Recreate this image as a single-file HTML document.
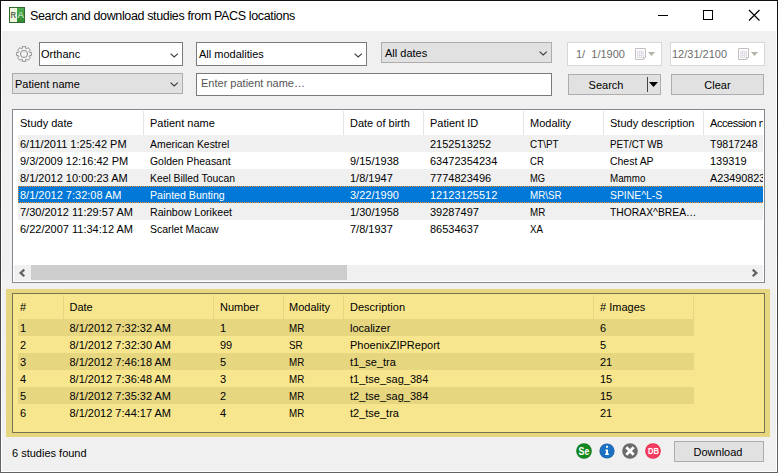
<!DOCTYPE html>
<html><head><meta charset="utf-8">
<style>
*{box-sizing:border-box;margin:0;padding:0}
html,body{width:778px;height:473px;overflow:hidden;background:#f0f0f0}
body{position:relative;font-family:"Liberation Sans",sans-serif;font-size:11px;color:#000}
.a{position:absolute}
.t{position:absolute;white-space:pre;line-height:13px;font-size:11px}
.cb{background:#fff;border:1px solid #7a7a7a}
.cbg{background:#e1e1e1;border:1px solid #adadad}
</style></head><body>
<div class="a" style="left:0;top:0;width:778px;height:473px;background:linear-gradient(#111,#636363)"></div>
<div class="a" style="left:1px;top:1px;width:776px;height:471px;background:#fff"></div>
<div class="a" style="left:2px;top:31px;width:774px;height:440px;background:#f0f0f0"></div>
<!-- app icon -->
<svg class="a" style="left:9px;top:7px" width="16" height="16" viewBox="0 0 16 16">
<defs><linearGradient id="g1" x1="0" y1="0" x2="0" y2="1"><stop offset="0" stop-color="#52ad4f"/><stop offset="1" stop-color="#2f8a30"/></linearGradient></defs>
<rect x="0.5" y="0.5" width="15" height="15" fill="url(#g1)" stroke="#2d6b2d"/>
<rect x="1" y="1" width="7" height="14" fill="#eff4de"/>
<text x="1.6" y="11.3" font-family="Liberation Sans" font-weight="bold" font-size="9.5" fill="#5c705c" textLength="5.6" lengthAdjust="spacingAndGlyphs">R</text>
<text x="8.4" y="11.3" font-family="Liberation Sans" font-size="9.5" fill="#e4f2e2" textLength="6.4" lengthAdjust="spacingAndGlyphs">A</text>
</svg>
<div class="t" style="left:30px;top:10px;font-size:12.5px;letter-spacing:-0.36px">Search and download studies from PACS locations</div>
<!-- caption buttons -->
<div class="a" style="left:658px;top:15px;width:10px;height:1px;background:#000"></div>
<div class="a" style="left:703px;top:10px;width:10px;height:10px;border:1px solid #000"></div>
<svg class="a" style="left:748px;top:9px" width="13" height="13" viewBox="0 0 13 13"><path d="M1 1L11.5 11.5M11.5 1L1 11.5" stroke="#000" stroke-width="1.15"/></svg>

<!-- row 1 controls -->
<svg class="a" style="left:16px;top:46px" width="16" height="16" viewBox="0 0 16 16"><g fill="#f8f8f8" stroke="#8c8c8c" stroke-width="1"><path d="M6.30 2.66 L6.30 0.70 L9.70 0.70 L9.70 2.66 L10.57 3.02 L11.96 1.63 L14.37 4.04 L12.98 5.43 L13.34 6.30 L15.30 6.30 L15.30 9.70 L13.34 9.70 L12.98 10.57 L14.37 11.96 L11.96 14.37 L10.57 12.98 L9.70 13.34 L9.70 15.30 L6.30 15.30 L6.30 13.34 L5.43 12.98 L4.04 14.37 L1.63 11.96 L3.02 10.57 L2.66 9.70 L0.70 9.70 L0.70 6.30 L2.66 6.30 L3.02 5.43 L1.63 4.04 L4.04 1.63 L5.43 3.02Z"/><circle cx="8" cy="8" r="3.6" fill="#f0f0f0"/></g></svg>
<div class="a cb" style="left:39px;top:42px;width:144px;height:24px"></div>
<div class="t" style="left:41px;top:48px">Orthanc</div>
<svg class="a" style="left:170px;top:53px" width="9" height="5" viewBox="0 0 9 5"><path d="M0.6 0.6L4.2 4L7.8 0.6" fill="none" stroke="#3a3a3a" stroke-width="1.1"/></svg>
<div class="a cb" style="left:196px;top:42px;width:171px;height:24px"></div>
<div class="t" style="left:199px;top:48px">All modalities</div>
<svg class="a" style="left:354px;top:53px" width="9" height="5" viewBox="0 0 9 5"><path d="M0.6 0.6L4.2 4L7.8 0.6" fill="none" stroke="#3a3a3a" stroke-width="1.1"/></svg>
<div class="a cbg" style="left:381px;top:42px;width:171px;height:21px"></div>
<div class="t" style="left:385px;top:47px">All dates</div>
<svg class="a" style="left:539px;top:51px" width="9" height="5" viewBox="0 0 9 5"><path d="M0.6 0.6L4.2 4L7.8 0.6" fill="none" stroke="#3a3a3a" stroke-width="1.1"/></svg>
<!-- date boxes -->
<div class="a" style="left:567px;top:42px;width:95px;height:24px;background:#fff;border:1px solid #d6d6d6"></div>
<div class="t" style="left:576px;top:48px;color:#6d6d6d">1/  1/1900</div>
<svg class="a" style="left:635px;top:48px" width="12" height="13" viewBox="0 0 12 13"><path d="M0.5 0.5H10.5V9.5L8.5 11.5H0.5Z" fill="#fdfdff" stroke="#c9bebe"/><rect x="2" y="3" width="7" height="7" fill="#e0e0e8"/><g fill="#fff"><rect x="3" y="4" width="1" height="1"/><rect x="5" y="4" width="1" height="1"/><rect x="7" y="4" width="1" height="1"/><rect x="3" y="6" width="1" height="1"/><rect x="5" y="6" width="1" height="1"/><rect x="7" y="6" width="1" height="1"/><rect x="3" y="8" width="1" height="1"/><rect x="5" y="8" width="1" height="1"/><rect x="7" y="8" width="1" height="1"/></g><path d="M8.5 11.5V9.5H10.5" fill="none" stroke="#d6cccc"/></svg>
<svg class="a" style="left:648px;top:52px" width="7" height="4" viewBox="0 0 7 4"><path d="M0 0H7L3.5 4Z" fill="#b4b4a6"/></svg>
<div class="a" style="left:670px;top:42px;width:95px;height:24px;background:#fff;border:1px solid #d6d6d6"></div>
<div class="t" style="left:672px;top:48px;color:#6d6d6d">12/31/2100</div>
<svg class="a" style="left:738px;top:48px" width="12" height="13" viewBox="0 0 12 13"><path d="M0.5 0.5H10.5V9.5L8.5 11.5H0.5Z" fill="#fdfdff" stroke="#c9bebe"/><rect x="2" y="3" width="7" height="7" fill="#e0e0e8"/><g fill="#fff"><rect x="3" y="4" width="1" height="1"/><rect x="5" y="4" width="1" height="1"/><rect x="7" y="4" width="1" height="1"/><rect x="3" y="6" width="1" height="1"/><rect x="5" y="6" width="1" height="1"/><rect x="7" y="6" width="1" height="1"/><rect x="3" y="8" width="1" height="1"/><rect x="5" y="8" width="1" height="1"/><rect x="7" y="8" width="1" height="1"/></g><path d="M8.5 11.5V9.5H10.5" fill="none" stroke="#d6cccc"/></svg>
<svg class="a" style="left:751px;top:52px" width="7" height="4" viewBox="0 0 7 4"><path d="M0 0H7L3.5 4Z" fill="#b4b4a6"/></svg>

<!-- row 2 controls -->
<div class="a cbg" style="left:12px;top:73px;width:171px;height:21px"></div>
<div class="t" style="left:15px;top:78px">Patient name</div>
<svg class="a" style="left:170px;top:82px" width="9" height="5" viewBox="0 0 9 5"><path d="M0.6 0.6L4.2 4L7.8 0.6" fill="none" stroke="#3a3a3a" stroke-width="1.1"/></svg>
<div class="a cb" style="left:196px;top:73px;width:356px;height:23px"></div>
<div class="t" style="left:201px;top:77px;color:#555">Enter patient name…</div>
<div class="a cbg" style="left:568px;top:74px;width:93px;height:21px"></div>
<div class="t" style="left:567px;top:79px;width:78px;text-align:center">Search</div>
<div class="a" style="left:647px;top:77px;width:1px;height:15px;background:#444"></div>
<svg class="a" style="left:649px;top:82px" width="9" height="5" viewBox="0 0 9 5"><path d="M0 0H9L4.5 5Z" fill="#000"/></svg>
<div class="a cbg" style="left:671px;top:74px;width:93px;height:21px"></div>
<div class="t" style="left:671px;top:79px;width:93px;text-align:center">Clear</div>


<div class="a" style="left:12px;top:109px;width:753px;height:174px;background:#fff;border:1px solid #828790"></div>
<div class="a" style="left:143px;top:111px;width:1px;height:24px;background:#e5e5e5"></div>
<div class="a" style="left:343px;top:111px;width:1px;height:24px;background:#e5e5e5"></div>
<div class="a" style="left:423px;top:111px;width:1px;height:24px;background:#e5e5e5"></div>
<div class="a" style="left:523px;top:111px;width:1px;height:24px;background:#e5e5e5"></div>
<div class="a" style="left:603px;top:111px;width:1px;height:24px;background:#e5e5e5"></div>
<div class="a" style="left:703px;top:111px;width:1px;height:24px;background:#e5e5e5"></div>
<div class="a" style="left:13px;top:110px;width:750px;height:155px;overflow:hidden">
<div class="t" style="left:7px;top:7px;">Study date</div>
<div class="t" style="left:137px;top:7px;">Patient name</div>
<div class="t" style="left:337px;top:7px;">Date of birth</div>
<div class="t" style="left:417px;top:7px;">Patient ID</div>
<div class="t" style="left:517px;top:7px;">Modality</div>
<div class="t" style="left:597px;top:7px;">Study description</div>
<div class="t" style="left:697px;top:7px;letter-spacing:-0.45px;">Accession number</div>
<div class="a" style="left:5px;top:25px;width:745px;height:17px;background:#f0f0f0"></div>
<div class="t" style="left:7px;top:28px;">6/11/2011 1:25:42 PM</div>
<div class="t" style="left:137px;top:28px;transform:scaleX(0.947);transform-origin:0 0;">American Kestrel</div>
<div class="t" style="left:417px;top:28px;">2152513252</div>
<div class="t" style="left:517px;top:28px;transform:scaleX(0.9);transform-origin:0 0;">CT\PT</div>
<div class="t" style="left:597px;top:28px;transform:scaleX(0.89);transform-origin:0 0;">PET/CT WB</div>
<div class="t" style="left:697px;top:28px;transform:scaleX(0.96);transform-origin:0 0;">T9817248</div>
<div class="t" style="left:7px;top:45px;">9/3/2009 12:16:42 PM</div>
<div class="t" style="left:137px;top:45px;transform:scaleX(0.948);transform-origin:0 0;">Golden Pheasant</div>
<div class="t" style="left:337px;top:45px;">9/15/1938</div>
<div class="t" style="left:417px;top:45px;">63472354234</div>
<div class="t" style="left:517px;top:45px;transform:scaleX(0.87);transform-origin:0 0;">CR</div>
<div class="t" style="left:597px;top:45px;transform:scaleX(0.95);transform-origin:0 0;">Chest AP</div>
<div class="t" style="left:697px;top:45px;">139319</div>
<div class="a" style="left:5px;top:59px;width:745px;height:17px;background:#f0f0f0"></div>
<div class="t" style="left:7px;top:62px;">8/1/2012 10:00:23 AM</div>
<div class="t" style="left:137px;top:62px;transform:scaleX(0.94);transform-origin:0 0;">Keel Billed Toucan</div>
<div class="t" style="left:337px;top:62px;">1/8/1947</div>
<div class="t" style="left:417px;top:62px;">7774823496</div>
<div class="t" style="left:517px;top:62px;transform:scaleX(0.85);transform-origin:0 0;">MG</div>
<div class="t" style="left:597px;top:62px;transform:scaleX(0.89);transform-origin:0 0;">Mammo</div>
<div class="t" style="left:697px;top:62px;transform:scaleX(0.98);transform-origin:0 0;">A23490823</div>
<div class="a" style="left:5px;top:76px;width:745px;height:17px;background:#0078d7"></div>
<div class="a" style="left:5px;top:76px;width:745px;height:17px;border:1px dotted #ff8a1c;border-right:0"></div>
<div class="t" style="left:7px;top:79px;color:#fff;">8/1/2012 7:32:08 AM</div>
<div class="t" style="left:137px;top:79px;color:#fff;transform:scaleX(0.962);transform-origin:0 0;">Painted Bunting</div>
<div class="t" style="left:337px;top:79px;color:#fff;">3/22/1990</div>
<div class="t" style="left:417px;top:79px;color:#fff;">12123125512</div>
<div class="t" style="left:517px;top:79px;color:#fff;transform:scaleX(0.89);transform-origin:0 0;">MR\SR</div>
<div class="t" style="left:597px;top:79px;color:#fff;transform:scaleX(0.945);transform-origin:0 0;">SPINE^L-S</div>
<div class="a" style="left:5px;top:93px;width:745px;height:17px;background:#f0f0f0"></div>
<div class="t" style="left:7px;top:96px;">7/30/2012 11:29:57 AM</div>
<div class="t" style="left:137px;top:96px;transform:scaleX(0.965);transform-origin:0 0;">Rainbow Lorikeet</div>
<div class="t" style="left:337px;top:96px;">1/30/1958</div>
<div class="t" style="left:417px;top:96px;">39287497</div>
<div class="t" style="left:517px;top:96px;transform:scaleX(0.89);transform-origin:0 0;">MR</div>
<div class="t" style="left:597px;top:96px;transform:scaleX(0.94);transform-origin:0 0;">THORAX^BREA…</div>
<div class="t" style="left:7px;top:113px;">6/22/2007 11:34:12 AM</div>
<div class="t" style="left:137px;top:113px;transform:scaleX(0.952);transform-origin:0 0;">Scarlet Macaw</div>
<div class="t" style="left:337px;top:113px;">7/8/1937</div>
<div class="t" style="left:417px;top:113px;">86534637</div>
<div class="t" style="left:517px;top:113px;transform:scaleX(0.88);transform-origin:0 0;">XA</div>
</div>
<div class="a" style="left:14px;top:265px;width:749px;height:16px;background:#f0f0f0"></div>
<div class="a" style="left:31px;top:265px;width:316px;height:15px;background:#cdcdcd"></div>
<svg class="a" style="left:14px;top:265px" width="17" height="16" viewBox="0 0 17 16"><path d="M10.3 4.6L6.6 7.9L10.3 11.2" fill="none" stroke="#606060" stroke-width="2.2"/></svg>
<svg class="a" style="left:746px;top:265px" width="17" height="16" viewBox="0 0 17 16"><path d="M6.7 4.6L10.4 7.9L6.7 11.2" fill="none" stroke="#606060" stroke-width="2.2"/></svg>
<div class="a" style="left:6px;top:289px;width:764px;height:148px;background:#e6d680"></div>
<div class="a" style="left:12px;top:293px;width:753px;height:140px;background:#f7e68e;border:1px solid #77734f"></div>
<div class="a" style="left:63px;top:295px;width:1px;height:24px;background:#e6d680"></div>
<div class="a" style="left:213px;top:295px;width:1px;height:24px;background:#e6d680"></div>
<div class="a" style="left:283px;top:295px;width:1px;height:24px;background:#e6d680"></div>
<div class="a" style="left:343px;top:295px;width:1px;height:24px;background:#e6d680"></div>
<div class="a" style="left:593px;top:295px;width:1px;height:24px;background:#e6d680"></div>
<div class="a" style="left:693px;top:295px;width:1px;height:24px;background:#e6d680"></div>
<div class="t" style="left:20px;top:301px;">#</div>
<div class="t" style="left:69.5px;top:301px;">Date</div>
<div class="t" style="left:220px;top:301px;">Number</div>
<div class="t" style="left:289px;top:301px;">Modality</div>
<div class="t" style="left:350px;top:301px;">Description</div>
<div class="t" style="left:600px;top:301px;"># Images</div>
<div class="a" style="left:18px;top:319px;width:676px;height:17px;background:#e6d680"></div>
<div class="t" style="left:20px;top:322px;">1</div>
<div class="t" style="left:69.5px;top:322px;">8/1/2012 7:32:32 AM</div>
<div class="t" style="left:220px;top:322px;">1</div>
<div class="t" style="left:289px;top:322px;transform:scaleX(0.89);transform-origin:0 0;">MR</div>
<div class="t" style="left:350px;top:322px;">localizer</div>
<div class="t" style="left:600px;top:322px;">6</div>
<div class="t" style="left:20px;top:339px;">2</div>
<div class="t" style="left:69.5px;top:339px;">8/1/2012 7:32:30 AM</div>
<div class="t" style="left:220px;top:339px;">99</div>
<div class="t" style="left:289px;top:339px;transform:scaleX(0.9);transform-origin:0 0;">SR</div>
<div class="t" style="left:350px;top:339px;">PhoenixZIPReport</div>
<div class="t" style="left:600px;top:339px;">5</div>
<div class="a" style="left:18px;top:353px;width:676px;height:17px;background:#e6d680"></div>
<div class="t" style="left:20px;top:356px;">3</div>
<div class="t" style="left:69.5px;top:356px;">8/1/2012 7:46:18 AM</div>
<div class="t" style="left:220px;top:356px;">5</div>
<div class="t" style="left:289px;top:356px;transform:scaleX(0.89);transform-origin:0 0;">MR</div>
<div class="t" style="left:350px;top:356px;">t1_se_tra</div>
<div class="t" style="left:600px;top:356px;">21</div>
<div class="t" style="left:20px;top:373px;">4</div>
<div class="t" style="left:69.5px;top:373px;">8/1/2012 7:36:48 AM</div>
<div class="t" style="left:220px;top:373px;">3</div>
<div class="t" style="left:289px;top:373px;transform:scaleX(0.89);transform-origin:0 0;">MR</div>
<div class="t" style="left:350px;top:373px;">t1_tse_sag_384</div>
<div class="t" style="left:600px;top:373px;">15</div>
<div class="a" style="left:18px;top:387px;width:676px;height:17px;background:#e6d680"></div>
<div class="t" style="left:20px;top:390px;">5</div>
<div class="t" style="left:69.5px;top:390px;">8/1/2012 7:35:32 AM</div>
<div class="t" style="left:220px;top:390px;">2</div>
<div class="t" style="left:289px;top:390px;transform:scaleX(0.89);transform-origin:0 0;">MR</div>
<div class="t" style="left:350px;top:390px;">t2_tse_sag_384</div>
<div class="t" style="left:600px;top:390px;">15</div>
<div class="t" style="left:20px;top:407px;">6</div>
<div class="t" style="left:69.5px;top:407px;">8/1/2012 7:44:17 AM</div>
<div class="t" style="left:220px;top:407px;">4</div>
<div class="t" style="left:289px;top:407px;transform:scaleX(0.89);transform-origin:0 0;">MR</div>
<div class="t" style="left:350px;top:407px;">t2_tse_tra</div>
<div class="t" style="left:600px;top:407px;">21</div>
<!-- status -->
<div class="t" style="left:12px;top:447px">6 studies found</div>
<svg class="a" style="left:576px;top:443px" width="16" height="16" viewBox="0 0 16 16">
<circle cx="8" cy="8" r="7.8" fill="#0d7a18"/><circle cx="8" cy="8" r="7" fill="#15891f"/>
<text x="2.6" y="11.7" font-family="Liberation Sans" font-weight="bold" font-size="11" fill="#fff" textLength="10.8" lengthAdjust="spacingAndGlyphs">Se</text>
</svg>
<svg class="a" style="left:599px;top:443px" width="16" height="16" viewBox="0 0 16 16">
<circle cx="8" cy="8" r="7.6" fill="#2a5e9c"/><circle cx="8" cy="8" r="7" fill="#1a70c2"/>
<rect x="7" y="2.8" width="2" height="1.9" fill="#fff"/>
<path d="M6.3 6.4H9V10.6H9.9V12H6.1V10.6H7V7.7H6.3Z" fill="#fff"/>
</svg>
<svg class="a" style="left:622px;top:443px" width="16" height="16" viewBox="0 0 16 16">
<circle cx="8" cy="8" r="7.8" fill="#6b6b6b"/>
<path d="M4.3 4.3L11.7 11.7M11.7 4.3L4.3 11.7" stroke="#fff" stroke-width="2.7"/>
</svg>
<svg class="a" style="left:645px;top:443px" width="16" height="16" viewBox="0 0 16 16">
<circle cx="8" cy="8" r="7.8" fill="#ea2446"/><circle cx="8" cy="8" r="7" fill="#f43e62"/>
<text x="3" y="10.9" font-family="Liberation Sans" font-weight="bold" font-size="8.8" fill="#fff" textLength="11" lengthAdjust="spacingAndGlyphs">DB</text>
</svg>
<div class="a cbg" style="left:674px;top:441px;width:90px;height:21px"></div>
<div class="t" style="left:673px;top:446px;width:90px;text-align:center">Download</div>
</body></html>
